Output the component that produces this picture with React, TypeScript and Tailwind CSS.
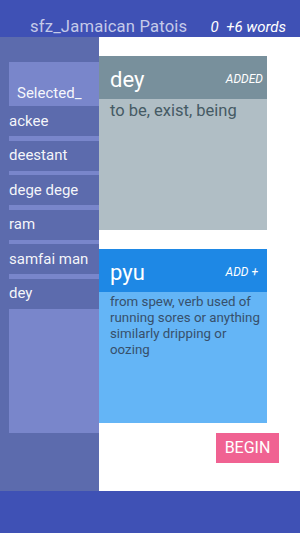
import React from "react";

const words = ["ackee", "deestant", "dege dege", "ram", "samfai man", "dey"];

export default function App() {
  return (
    <div className="w-[300px] h-[533px] flex flex-col overflow-hidden" style={{ fontFamily: "Roboto, 'Noto Sans', sans-serif" }}>
      <header className="h-[37px] shrink-0 bg-[#3f51b5] flex items-end">
        <div className="pl-[30px] text-[16.6px] leading-[20px] text-[#c5cae9] tracking-[0.2px]">sfz_Jamaican Patois</div>
        <div className="ml-auto pr-[14px] text-[15px] leading-[20px] italic text-white">0 &nbsp;+6 words</div>
      </header>
      <div className="flex flex-1 min-h-0">
        <aside className="w-[99px] shrink-0 bg-[#5c6bad] flex flex-col pt-[25px]">
          <div className="ml-[9px] h-[44px] bg-[#7986cb] pl-[8px] pt-[21px] text-[15px] leading-[20px] text-white/95">Selected_</div>
          {words.map((w, i) => (
            <div key={w}>
              <div className="h-[30px] pl-[9px] flex items-center text-[15px] text-white/95">{w}</div>
              {i < words.length - 1 && <div className="ml-[9px] h-[4.5px] bg-[#7986cb]" />}
            </div>
          ))}
          <div className="ml-[9px] h-[124.5px] bg-[#7986cb]" />
        </aside>
        <main className="flex-1 bg-white flex flex-col pt-[19px]">
          <div className="w-[168px] h-[174px] bg-[#b0bec5] flex flex-col">
            <div className="h-[43px] bg-[#78909c] flex items-center pl-[11px] pr-[4px] pt-[3px]">
              <span className="text-[22px] text-white">dey</span>
              <span className="ml-auto text-[12px] italic text-white">ADDED</span>
            </div>
            <div className="pl-[11px] pt-[2px] text-[16.5px] leading-[20px] text-[#455a64]">to be, exist, being</div>
          </div>
          <div className="mt-[19px] w-[168px] h-[174px] bg-[#64b5f6] flex flex-col">
            <div className="h-[43px] bg-[#1e88e5] flex items-center pl-[11px] pr-[9px] pt-[3px]">
              <span className="text-[22px] text-white">pyu</span>
              <span className="ml-auto text-[12px] italic text-white">ADD +</span>
            </div>
            <div className="pl-[11px] pr-[2px] pt-[2px] text-[13.3px] leading-[16px] text-[#37506b]">from spew, verb used of running sores or anything similarly dripping or oozing</div>
          </div>
          <div className="flex justify-end pr-[21px] mt-[10px]">
            <button className="w-[63px] h-[30px] bg-[#f06292] text-white text-[16px] flex items-center justify-center">BEGIN</button>
          </div>
        </main>
      </div>
      <footer className="h-[42px] shrink-0 bg-[#3f51b5]" />
    </div>
  );
}
